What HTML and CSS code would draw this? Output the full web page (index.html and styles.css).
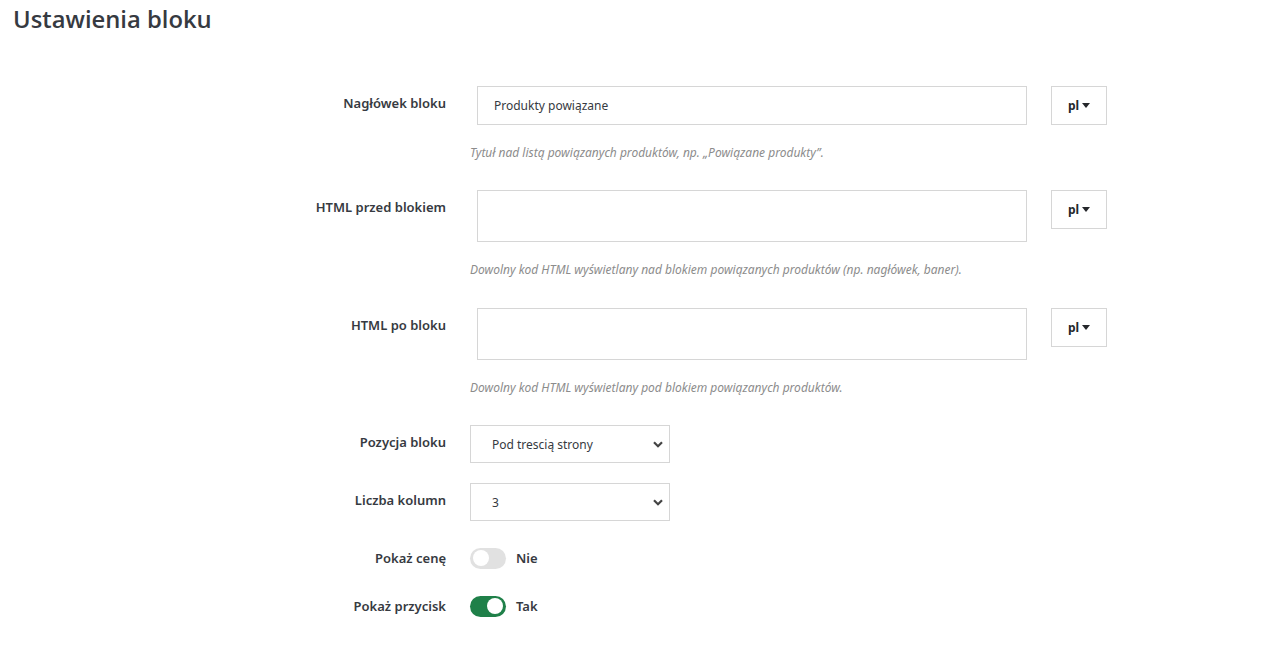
FILE: index.html
```html
<!DOCTYPE html>
<html lang="pl">
<head>
<meta charset="utf-8">
<title>Ustawienia bloku</title>
<link rel="stylesheet" href="styles.css">
</head>
<body>
<div class="page">
  <h1 class="page-title">Ustawienia bloku</h1>

  <form class="settings">
    <div class="row row-trans">
      <label class="row-label">Nagłówek bloku</label>
      <div class="row-field">
        <div class="trans">
          <input class="text-input" type="text" value="Produkty powiązane">
          <button type="button" class="lang-btn">pl<span class="caret"></span></button>
        </div>
        <p class="help">Tytuł nad listą powiązanych produktów, np. „Powiązane produkty”.</p>
      </div>
    </div>

    <div class="row row-trans row-tall">
      <label class="row-label">HTML przed blokiem</label>
      <div class="row-field">
        <div class="trans">
          <textarea class="text-area"></textarea>
          <button type="button" class="lang-btn">pl<span class="caret"></span></button>
        </div>
        <p class="help">Dowolny kod HTML wyświetlany nad blokiem powiązanych produktów (np. nagłówek, baner).</p>
      </div>
    </div>

    <div class="row row-trans">
      <label class="row-label">HTML po bloku</label>
      <div class="row-field">
        <div class="trans">
          <textarea class="text-area"></textarea>
          <button type="button" class="lang-btn">pl<span class="caret"></span></button>
        </div>
        <p class="help">Dowolny kod HTML wyświetlany pod blokiem powiązanych produktów.</p>
      </div>
    </div>

    <div class="row row-select">
      <label class="row-label">Pozycja bloku</label>
      <div class="row-field">
        <div class="select-wrap">
          <select class="select">
            <option>Pod trescią strony</option>
          </select>
          <svg class="chevron" width="10" height="7" viewBox="0 0 10 7"><path d="M1 1.2 L5 5.2 L9 1.2" fill="none" stroke="#444" stroke-width="2.2"/></svg>
        </div>
      </div>
    </div>

    <div class="row row-select">
      <label class="row-label">Liczba kolumn</label>
      <div class="row-field">
        <div class="select-wrap">
          <select class="select">
            <option>3</option>
          </select>
          <svg class="chevron" width="10" height="7" viewBox="0 0 10 7"><path d="M1 1.2 L5 5.2 L9 1.2" fill="none" stroke="#444" stroke-width="2.2"/></svg>
        </div>
      </div>
    </div>

    <div class="row row-switch">
      <label class="row-label">Pokaż cenę</label>
      <div class="row-field switch-field">
        <span class="switch"><span class="knob"></span></span>
        <span class="switch-text">Nie</span>
      </div>
    </div>

    <div class="row row-switch">
      <label class="row-label">Pokaż przycisk</label>
      <div class="row-field switch-field">
        <span class="switch is-on"><span class="knob"></span></span>
        <span class="switch-text">Tak</span>
      </div>
    </div>
  </form>
</div>
</body>
</html>
```

FILE: styles.css
```css
* {
  box-sizing: border-box;
}

html, body {
  margin: 0;
  background: #fff;
}

body {
  font-family: "Noto Sans", "Open Sans", sans-serif;
  color: #363a41;
}

.page {
  padding: 3px 13px 0;
}

.page-title {
  margin: 0;
  font-family: "Open Sans", sans-serif;
  font-weight: 600;
  font-size: 23.8px;
  line-height: 33px;
  color: #363a41;
}

.settings {
  margin-top: 50px;
}

.row {
  display: grid;
  grid-template-columns: 433px 1fr;
  column-gap: 24px;
  align-items: start;
}

.row-label {
  text-align: right;
  font-size: 13px;
  font-weight: 600;
  line-height: 20px;
  padding-top: 7px;
  color: #363a41;
}

/* translatable fields: input + language dropdown */
.row-trans {
  margin-bottom: 29px;
}

.row-trans.row-tall {
  margin-bottom: 30px;
}

.trans {
  display: flex;
  align-items: flex-start;
  gap: 24px;
  padding-left: 7px;
}

.text-input,
.text-area {
  width: 550px;
  border: 1px solid #d6d6d6;
  border-radius: 0;
  font-family: inherit;
  font-size: 12px;
  color: #363a41;
  padding: 0 16px;
  outline: none;
  background: #fff;
  margin: 0;
}

.text-input {
  height: 39px;
}

.text-area {
  height: 52px;
  resize: none;
  display: block;
}

.lang-btn {
  width: 56px;
  height: 39px;
  border: 1px solid #d6d6d6;
  background: #fff;
  font-family: inherit;
  font-weight: 700;
  font-size: 12px;
  color: #25272b;
  display: flex;
  align-items: center;
  justify-content: center;
  gap: 3px;
  padding: 0;
  margin: 0;
}

.caret {
  width: 0;
  height: 0;
  border-left: 4.5px solid transparent;
  border-right: 4.5px solid transparent;
  border-top: 5px solid #25272b;
}

.help {
  margin: 20px 0 0;
  font-size: 12px;
  line-height: 16px;
  font-style: italic;
  color: #8c8c8c;
}

/* selects */
.row-select {
  margin-bottom: 20px;
}

.select-wrap {
  position: relative;
  width: 200px;
}

.select {
  appearance: none;
  -webkit-appearance: none;
  width: 200px;
  height: 38px;
  border: 1px solid #d6d6d6;
  border-radius: 0;
  background: #fff;
  font-family: inherit;
  font-size: 12px;
  color: #363a41;
  padding: 0 30px 0 21px;
  outline: none;
  margin: 0;
}

.chevron {
  position: absolute;
  right: 7px;
  top: 16px;
  pointer-events: none;
}

/* switches */
.row-switch {
  margin-top: 23px;
}

.row-switch + .row-switch {
  margin-top: 20px;
}

.row-switch .row-label {
  padding-top: 4px;
}

.switch-field {
  display: flex;
  align-items: center;
  gap: 10px;
  height: 28px;
}

.switch {
  position: relative;
  width: 36px;
  height: 21px;
  border-radius: 11px;
  background: #e1e1e1;
  display: inline-block;
}

.switch .knob {
  position: absolute;
  top: 2.5px;
  left: 3px;
  width: 16px;
  height: 16px;
  border-radius: 50%;
  background: #fff;
}

.switch.is-on {
  background: #1f8049;
}

.switch.is-on .knob {
  left: 17px;
}

.switch-text {
  font-size: 13px;
  font-weight: 600;
  color: #363a41;
}
```
